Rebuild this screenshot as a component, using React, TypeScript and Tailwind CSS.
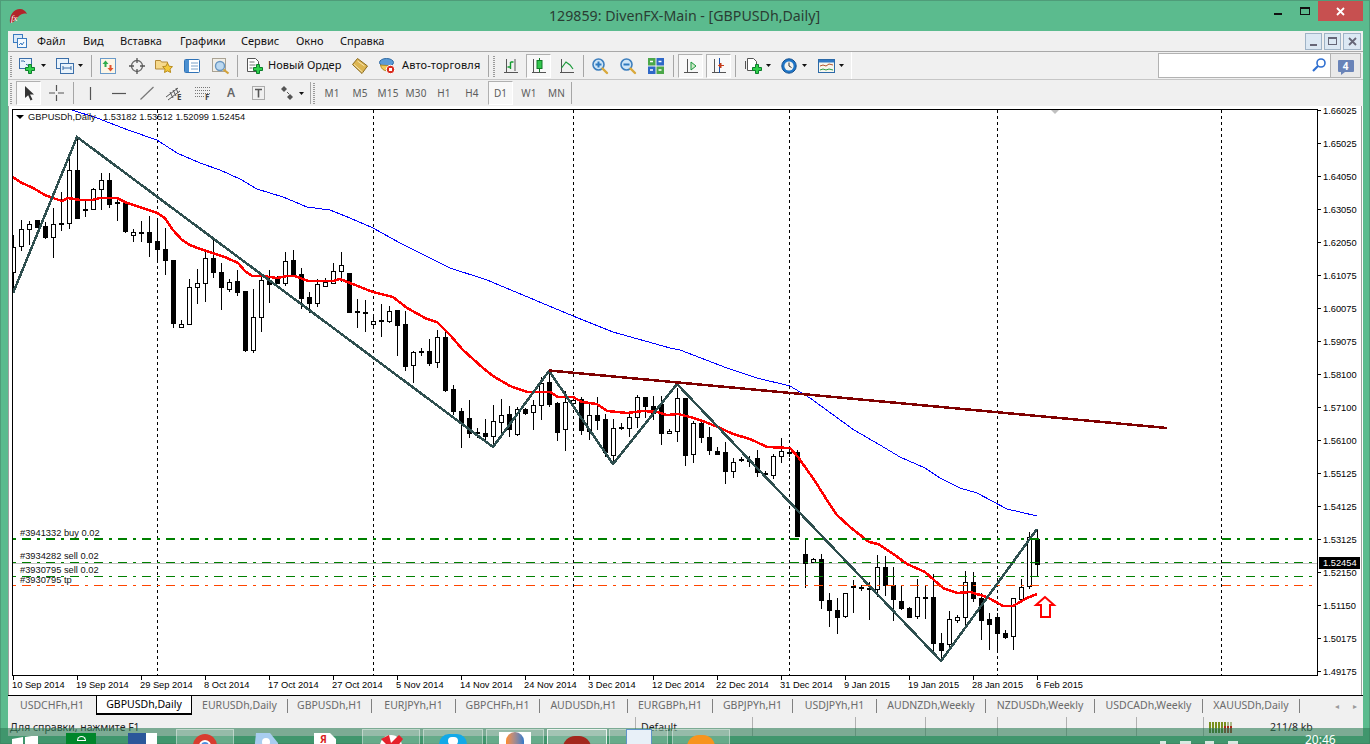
import type { ReactNode } from "react";

// candle rows: x, body top, body bottom, high, low, white (y read off 3x crops)
type Row = [number, number, number, number, number, number];

const ROWS_A: Row[] = [
  [13, 410, 485, 375, 550, 1], [21, 358, 410, 330, 422, 1], [29, 343, 358, 333, 405, 1], [37, 330, 350, 330, 352, 0],
  [45, 348, 380, 335, 388, 0], [53, 343, 382, 295, 445, 1], [61, 340, 343, 245, 362, 1], [69, 180, 340, 140, 357, 1],
  [77, 180, 323, 85, 323, 0], [85, 298, 302, 270, 320, 0], [93, 238, 298, 235, 300, 1], [101, 210, 238, 190, 300, 1],
  [109, 210, 282, 190, 295, 0], [117, 277, 281, 265, 332, 0], [125, 280, 365, 275, 368, 0], [133, 367, 376, 358, 395, 1],
  [141, 366, 367, 332, 395, 0], [149, 366, 395, 318, 440, 0], [157, 393, 418, 330, 455, 0], [165, 418, 452, 355, 495, 0],
  [173, 450, 638, 450, 655, 0], [181, 643, 652, 630, 653, 1], [189, 532, 643, 507, 645, 1], [197, 520, 532, 478, 582, 1],
  [205, 445, 520, 420, 575, 1], [213, 445, 488, 380, 503, 0], [221, 487, 532, 460, 600, 0], [229, 515, 535, 508, 545, 1],
  [237, 513, 545, 480, 557, 0], [245, 543, 720, 543, 725, 0], [253, 620, 718, 537, 730, 1], [261, 510, 620, 497, 665, 1],
  [269, 510, 522, 480, 578, 0], [277, 503, 518, 497, 523, 0], [285, 452, 517, 427, 527, 1], [293, 450, 495, 420, 497, 0],
  [301, 492, 563, 475, 597, 0], [309, 562, 580, 545, 610, 0], [317, 523, 580, 507, 592, 1], [325, 517, 530, 505, 530, 1],
  [333, 482, 517, 460, 520, 1], [341, 466, 485, 425, 515, 1],
];

const ROWS_B: Row[] = [
  [349, -21, 95, -21, 95, 0], [357, 94, 97, 58, 143, 0], [365, 97, 100, 60, 155, 0], [373, 124, 133, 112, 145, 1],
  [381, 121, 124, 72, 170, 0], [389, 92, 122, 78, 130, 1], [397, 90, 134, 90, 228, 0], [405, 132, 258, 92, 272, 0],
  [413, 217, 257, 212, 308, 1], [421, 213, 216, 205, 228, 0], [429, 213, 248, 178, 257, 0], [437, 172, 248, 150, 263, 1],
  [445, 172, 330, 155, 335, 0], [453, 328, 395, 315, 405, 0], [461, 393, 428, 385, 503, 0], [469, 415, 460, 360, 475, 0],
  [477, 457, 460, 445, 475, 0], [485, 460, 470, 418, 480, 0], [493, 424, 470, 375, 500, 1], [501, 404, 424, 358, 465, 1],
  [509, 403, 447, 378, 470, 0], [517, 388, 464, 382, 467, 1], [525, 388, 400, 385, 405, 0], [533, 376, 397, 360, 450, 1],
  [541, 310, 377, 290, 420, 1], [549, 306, 371, 280, 380, 0], [557, 368, 455, 365, 482, 0], [565, 367, 448, 332, 512, 1],
  [573, 360, 368, 350, 368, 1], [581, 358, 452, 352, 465, 0], [589, 405, 452, 370, 480, 1], [597, 405, 420, 350, 450, 0],
  [605, 417, 517, 402, 530, 0], [613, 445, 527, 418, 555, 1], [621, 442, 445, 430, 450, 0], [629, 412, 446, 393, 470, 1],
  [637, 352, 412, 345, 445, 1], [645, 352, 380, 352, 415, 0], [653, 378, 400, 348, 420, 0], [661, 372, 458, 348, 495, 0],
  [669, 453, 460, 447, 462, 1], [677, 355, 455, 325, 487, 1], [685, 353, 524, 353, 557, 0], [693, 430, 523, 423, 550, 1],
  [701, 430, 473, 418, 490, 0], [709, 472, 512, 442, 525, 0], [717, 512, 520, 500, 525, 0], [725, 517, 575, 487, 612, 0],
  [733, 547, 574, 535, 593, 1], [741, 537, 540, 530, 545, 0], [749, 539, 542, 528, 562, 0], [757, 535, 578, 510, 590, 0],
  [765, 579, 582, 572, 590, 0], [773, 528, 584, 522, 597, 1], [781, 514, 528, 475, 548, 1], [789, 516, 519, 505, 530, 0],
];

const ROWS_C: Row[] = [
  [797, 67, 320, 60, 320, 0], [805, 372, 398, 325, 473, 0], [813, 387, 396, 385, 400, 1], [821, 388, 512, 372, 537, 0],
  [829, 511, 542, 490, 590, 0], [837, 540, 560, 505, 612, 0], [845, 490, 560, 488, 563, 1], [853, 468, 472, 450, 548, 0],
  [861, 471, 475, 466, 483, 0], [869, 475, 479, 455, 570, 0], [877, 412, 478, 375, 500, 1], [885, 412, 467, 378, 498, 0],
  [893, 465, 506, 412, 572, 0], [901, 514, 536, 465, 540, 0], [909, 534, 560, 530, 565, 0], [917, 502, 560, 447, 568, 1],
  [925, 500, 503, 465, 568, 0], [933, 502, 640, 432, 665, 0], [941, 640, 662, 610, 695, 0], [949, 568, 643, 543, 655, 1],
  [957, 562, 570, 555, 578, 1], [965, 457, 562, 422, 587, 1], [973, 457, 505, 425, 515, 0], [981, 505, 570, 490, 630, 0],
  [989, 568, 582, 548, 660, 0], [997, 562, 611, 548, 660, 0], [1005, 610, 622, 600, 627, 0], [1013, 505, 620, 505, 660, 1],
  [1021, 470, 505, 447, 510, 1], [1029, 320, 468, 305, 478, 1], [1037, 327, 401, 297, 438, 0],
];

const CANDLES: Row[] = [
  ...ROWS_A.map((r) => shift(r, 110)),
  ...ROWS_B.map((r) => shift(r, 280)),
  ...ROWS_C.map((r) => shift(r, 430)),
];

function shift(r: Row, top: number): Row {
  return [r[0], top + r[1] / 3, top + r[2] / 3, top + r[3] / 3, top + r[4] / 3, r[5]];
}

const RED =
  "13,177 20,182 33,188 45,195 53,198 62,201 68,198 80,200 92,200 100,198 117,198 127,203 143,208 157,213 165,218 173,230 182,240 190,245 200,249 213,253 227,258 238,263 245,271 252,276 263,276 277,278 287,276 295,276 308,281 333,281 340,279 350,283 373,292 393,297 407,308 427,319 437,322 450,335 463,350 483,368 493,376 510,386 527,392 550,392 558,397 573,397 582,402 597,404 607,411 627,413 643,411 657,412 667,415 678,414 690,417 703,421 720,428 733,434 750,439 767,447 790,448 798,457 810,474 813,478 825,497 837,515 850,527 869,542 878,544 892,553 907,564 925,572 943,588 957,593 970,592 987,597 1003,606 1013,606 1027,598 1037,594";

const BLUE =
  "72,110 97,118 128,130 157,140 177,153 200,163 220,170 240,179 257,189 283,197 307,207 330,210 350,218 373,228 400,243 450,268 487,280 573,316 613,332 670,348 680,350 727,368 757,378 790,386 810,398 854,430 880,445 900,457 925,468 940,478 960,488 977,493 1007,509 1037,516";

const ZIGZAG = "13,293 77,137 493,447 549,371 613,464 677,384 941,661 1037,529";

const PRICES = [
  [111, "1.66025"], [144, "1.65025"], [177, "1.64050"], [210, "1.63050"], [243, "1.62050"], [276, "1.61075"],
  [309, "1.60075"], [342, "1.59075"], [375, "1.58100"], [408, "1.57100"], [441, "1.56100"], [474, "1.55125"],
  [507, "1.54125"], [540, "1.53125"], [573, "1.52150"], [606, "1.51150"], [639, "1.50175"], [672, "1.49175"],
] as const;

const DATES = [
  "10 Sep 2014", "19 Sep 2014", "29 Sep 2014", "8 Oct 2014", "17 Oct 2014", "27 Oct 2014", "5 Nov 2014", "14 Nov 2014",
  "24 Nov 2014", "3 Dec 2014", "12 Dec 2014", "22 Dec 2014", "31 Dec 2014", "9 Jan 2015", "19 Jan 2015", "28 Jan 2015", "6 Feb 2015",
];

const TABS = [
  { label: "USDCHFh,H1", w: "w-[88px]" },
  { label: "GBPUSDh,Daily", w: "w-[96px]", active: true },
  { label: "EURUSDh,Daily", w: "w-[96px]", sep: true },
  { label: "GBPUSDh,H1", w: "w-[84px]", sep: true },
  { label: "EURJPYh,H1", w: "w-[84px]", sep: true },
  { label: "GBPCHFh,H1", w: "w-[84px]", sep: true },
  { label: "AUDUSDh,H1", w: "w-[88px]", sep: true },
  { label: "EURGBPh,H1", w: "w-[85px]", sep: true },
  { label: "GBPJPYh,H1", w: "w-[80px]", sep: true },
  { label: "USDJPYh,H1", w: "w-[84px]", sep: true },
  { label: "AUDNZDh,Weekly", w: "w-[109px]", sep: true },
  { label: "NZDUSDh,Weekly", w: "w-[109px]", sep: true },
  { label: "USDCADh,Weekly", w: "w-[108px]", sep: true },
  { label: "XAUUSDh,Daily", w: "w-[97px]", sep: true },
];

const MENU = [
  { label: "Файл", w: "w-[46px]" },
  { label: "Вид", w: "w-[37px]" },
  { label: "Вставка", w: "w-[60px]" },
  { label: "Графики", w: "w-[61px]" },
  { label: "Сервис", w: "w-[55px]" },
  { label: "Окно", w: "w-[44px]" },
  { label: "Справка", w: "w-[60px]" },
];

function Plus({ x, y }: { x: number; y: number }) {
  return (
    <path
      d={`M${x + 3.5} ${y + 0.5}h3v3h3v3h-3v3h-3v-3h-3v-3h3z`}
      fill="#2fd04a"
      stroke="#0c7f2c"
    />
  );
}

function Drop({ className = "" }: { className?: string }) {
  return (
    <svg width="5" height="3" viewBox="0 0 5 3" className={className}>
      <path d="M0 0h5L2.5 3z" fill="#111" />
    </svg>
  );
}

function Sep({ className = "" }: { className?: string }) {
  return <div className={`h-[22px] w-px bg-[#a6a6a6] ${className}`} />;
}

function Grip({ className = "" }: { className?: string }) {
  return (
    <div
      className={`h-[22px] w-[2px] bg-[repeating-linear-gradient(0deg,#9a9a9a_0_1px,transparent_1px_2px)] ${className}`}
    />
  );
}

function Pressed({ className = "", children }: { className?: string; children: ReactNode }) {
  return (
    <div
      className={`flex h-[24px] w-[25px] flex-shrink-0 items-center justify-center border border-t-[#b0b0b0] border-l-[#b0b0b0] border-r-white border-b-white bg-[#f8f8f8] ${className}`}
    >
      {children}
    </div>
  );
}

function Icon({ w, h = 16, className = "", children }: { w: number; h?: number; className?: string; children: ReactNode }) {
  return (
    <svg width={w} height={h} viewBox={`0 0 ${w} ${h}`} fill="none" className={`flex-shrink-0 overflow-visible ${className}`}>
      {children}
    </svg>
  );
}

function Loupe({ sign }: { sign: "+" | "-" }) {
  return (
    <Icon w={16}>
      <circle cx="6.5" cy="6.5" r="5.5" fill="#cfe6f7" stroke="#3d7fbe" strokeWidth="1.6" />
      <path d="M3.5 6.5h6" stroke="#2f7ac0" strokeWidth="2" />
      {sign === "+" && <path d="M6.5 3.5v6" stroke="#2f7ac0" strokeWidth="2" />}
      <path d="M10.5 10.5l4.5 4.5" stroke="#d9a93c" strokeWidth="2.4" strokeLinecap="round" />
    </Icon>
  );
}

function Toolbars() {
  return (
    <>
      <div className="flex h-[28px] items-center border-t border-[#a8a8a8]">
        <Grip className="ml-[2px]" />
        <Icon w={16} className="ml-[7px]">
          <rect x="0.5" y="0.5" width="12" height="10" fill="#e9f3fb" stroke="#3b6ea8" />
          <path d="M2 3h3M8 7h3M5 3l1 1M8 7l-1-1" stroke="#3b6ea8" />
          <Plus x={6} y={6} />
        </Icon>
        <Drop className="ml-[6px]" />
        <Icon w={18} className="ml-[10px]">
          <rect x="0.5" y="0.5" width="12" height="10" fill="#e9f3fb" stroke="#3b6ea8" />
          <rect x="4.5" y="5.5" width="13" height="10" fill="#e9f3fb" stroke="#3b6ea8" />
          <path d="M7 10h8M7 8v4M15 8v4" stroke="#3b6ea8" />
        </Icon>
        <Drop className="ml-[4px]" />
        <Sep className="ml-[8px]" />
        <Icon w={16} className="ml-[8px]">
          <rect x="0.5" y="0.5" width="15" height="15" fill="#fdf6e6" stroke="#6a9ac9" />
          <path d="M5.5 2.5l-3 3.5h2v3h2V6h2z" fill="#2fae4c" />
          <path d="M10.5 13.5l3-3.5h-2V7h-2v3h-2z" fill="#e2542e" />
        </Icon>
        <Icon w={16} className="ml-[13px]">
          <circle cx="8" cy="8" r="5.5" stroke="#666" strokeWidth="1.3" />
          <path d="M8 0v5M8 11v5M0 8h5M11 8h5" stroke="#555" strokeWidth="1.3" />
        </Icon>
        <Icon w={18} className="ml-[10px]">
          <path d="M0.5 2.5h5l1 1.5h6v7h-12z" fill="#f6d98c" stroke="#b48a38" />
          <path d="M12.5 5l1.6 3.2 3.4.5-2.5 2.4.6 3.4-3.1-1.6-3 1.6.6-3.4-2.5-2.4 3.4-.5z" fill="#f4c93a" stroke="#b98c1c" />
        </Icon>
        <Icon w={16} className="ml-[11px]">
          <rect x="0.5" y="1.5" width="15" height="13" rx="1" fill="#fff" stroke="#2f72b6" />
          <rect x="1" y="2" width="4" height="12" fill="#4b8fd0" />
          <path d="M7 5h7M7 8h7M7 11h7" stroke="#7ba2c8" />
        </Icon>
        <Icon w={18} className="ml-[12px]">
          <rect x="0.5" y="0.5" width="13" height="13" fill="#f1eee6" stroke="#a9a293" />
          <circle cx="8" cy="8" r="4.5" fill="#bcd9f0" stroke="#6a97c1" strokeWidth="1.4" />
          <path d="M11.5 11.5l5 4" stroke="#d2a23b" strokeWidth="2.2" />
        </Icon>
        <Sep className="ml-[7px]" />
        <Icon w={16} className="ml-[9px]">
          <path d="M0.5 0.5h8l3 3v10h-11z" fill="#fff" stroke="#555" />
          <path d="M2.5 4h5M2.5 7h6M2.5 10h3" stroke="#777" />
          <Plus x={6} y={6} />
        </Icon>
        <span className="ml-[5px] w-[74px] flex-shrink-0 whitespace-nowrap text-[11px] text-[#111]">
          Новый Ордер
        </span>
        <Icon w={16} className="ml-[10px]">
          <path d="M5.5 0.5L15.500 8 10 15.500 0.500 6.500z" fill="#dcb552" stroke="#8a6a1e" />
          <path d="M2 6.500l8.500 7.500M5.500 3l7 5" stroke="#f7e6b0" />
        </Icon>
        <Icon w={16} className="ml-[11px]">
          <ellipse cx="7.500" cy="4.500" rx="7" ry="4" fill="#5b9bd6" stroke="#2f6aa4" />
          <path d="M1.500 7c1 7 10 8 12 1z" fill="#f1ca58" stroke="#b08a28" />
          <circle cx="11.500" cy="11.500" r="4.200" fill="#d92c1f" stroke="#fff" />
          <rect x="10" y="10" width="3" height="3" fill="#fff" />
        </Icon>
        <span className="ml-[7px] w-[78px] flex-shrink-0 whitespace-nowrap text-[11px] tracking-[0.15px] text-[#111]">
          Авто-торговля
        </span>
        <Sep className="ml-[8px]" />
        <Grip className="ml-[4px]" />
        <Icon w={14} className="ml-[9px]">
          <path d="M2.5 1v13M0 14.5h14" stroke="#555" />
          <path d="M6.5 11V4M6.5 4h3M3.5 9h3" stroke="#129a2e" strokeWidth="1.4" />
          <path d="M11 1v12" stroke="#555" />
        </Icon>
        <Pressed className="ml-[8px]">
          <Icon w={14}>
            <path d="M1.5 1v13M0 14.5h14" stroke="#555" />
            <path d="M7.5 0v14" stroke="#0f7b26" />
            <rect x="5" y="2.5" width="5" height="8" fill="#33c64d" stroke="#0f7b26" />
          </Icon>
        </Pressed>
        <Icon w={14} className="ml-[9px]">
          <path d="M1.5 1v13M0 14.5h14" stroke="#555" />
          <path d="M1.5 10L6 4l4 3 3 4" stroke="#1a9a3a" strokeWidth="1.2" />
        </Icon>
        <Sep className="ml-[9px]" />
        <div className="ml-[8px] flex">
          <Loupe sign="+" />
        </div>
        <div className="ml-[12px] flex">
          <Loupe sign="-" />
        </div>
        <Icon w={16} className="ml-[12px]">
          <rect x="0" y="0" width="7.5" height="7.5" fill="#4ca84a" />
          <rect x="8.5" y="0" width="7.5" height="7.5" fill="#2f68c8" />
          <rect x="0" y="8.5" width="7.5" height="7.5" fill="#2f68c8" />
          <rect x="8.5" y="8.5" width="7.5" height="7.5" fill="#4ca84a" />
          <path d="M2 3.5h3M10.5 3.5h3M2 12h3M10.5 12h3" stroke="#fff" strokeWidth="1.4" />
        </Icon>
        <Sep className="ml-[9px]" />
        <Pressed className="ml-[4px]">
          <Icon w={14}>
            <path d="M3.5 1v13M0 14.5h14" stroke="#555" />
            <path d="M7 4l5 4-5 4z" fill="#cfe9c8" stroke="#17953a" />
          </Icon>
        </Pressed>
        <Pressed className="ml-[3px]">
          <Icon w={14}>
            <path d="M2.5 1v13M0 14.5h14" stroke="#555" />
            <path d="M7.5 0v15" stroke="#1b50a8" />
            <path d="M12 7.5H9M9 5v5L6.5 7.5z" fill="#c43b1a" stroke="#c43b1a" />
          </Icon>
        </Pressed>
        <Sep className="ml-[4px]" />
        <Icon w={17} className="ml-[9px]">
          <path d="M2.5 0.5h6l3 3v9h-9z" fill="#fff" stroke="#555" />
          <path d="M0.5 3v8" stroke="#555" />
          <Plus x={7} y={6} />
        </Icon>
        <Drop className="ml-[4px]" />
        <Icon w={16} className="ml-[10px]">
          <circle cx="8" cy="8" r="7.2" fill="#1f76c8" stroke="#14508f" />
          <circle cx="8" cy="8" r="4.6" fill="#f3f3ef" />
          <path d="M8 4.5V8l2.5 1.5" stroke="#333" />
        </Icon>
        <Drop className="ml-[5px]" />
        <Icon w={17} className="ml-[11px]">
          <rect x="0.5" y="1.5" width="16" height="13" fill="#f6f6ee" stroke="#2c6aa8" />
          <rect x="1" y="2" width="15" height="2.5" fill="#2f79c6" />
          <path d="M2 8l3-1 3 1 3-2 4 1" stroke="#b2552f" />
          <path d="M2 12l3-1 3 1 3-1 4 1" stroke="#2d9c45" />
        </Icon>
        <Drop className="ml-[4px]" />
        <div className="ml-[7px] h-full w-px bg-white" />
        <div className="ml-auto flex h-[25px] items-stretch pr-[2px]">
          <div className="flex w-[173px] items-center justify-end border border-[#b2b2b2] bg-white pr-[4px]">
            <Icon w={14}>
              <circle cx="9" cy="5" r="4" stroke="#2f6fd0" strokeWidth="1.6" />
              <path d="M6 8l-5 5" stroke="#2f6fd0" strokeWidth="2.2" />
            </Icon>
          </div>
          <div className="flex w-[30px] items-center justify-center border border-l-0 border-[#b2b2b2] bg-[#e9e9e9]">
            <div className="relative flex h-[12px] w-[16px] items-center justify-center rounded-[1px] bg-[#6a84b8] text-[10px] font-bold leading-none text-white">
              4
              <div className="absolute bottom-[-3px] left-[3px] h-0 w-0 border-r-[4px] border-t-[3px] border-r-transparent border-t-[#6a84b8]" />
            </div>
          </div>
        </div>
      </div>

      <div className="flex h-[27px] items-center border-t border-[#c6c6c6]">
        <Grip className="ml-[2px]" />
        <Pressed className="ml-[4px]">
          <Icon w={12}>
            <path d="M2 1l9 8.5H7l2.5 5-2 1-2.3-5.200L2 13z" fill="#333" />
          </Icon>
        </Pressed>
        <Icon w={15} className="ml-[8px]">
          <path d="M7.5 0v6M7.5 10v6M0 8h6M9 8h6" stroke="#555" strokeWidth="1.2" />
        </Icon>
        <Sep className="ml-[9px]" />
        <Icon w={16} className="ml-[9px]">
          <path d="M7.5 2v13" stroke="#555" strokeWidth="1.2" />
        </Icon>
        <Icon w={14} className="ml-[13px]">
          <path d="M0 8.500h14" stroke="#555" strokeWidth="1.2" />
        </Icon>
        <Icon w={14} className="ml-[14px]">
          <path d="M0.500 14.500L13.500 2" stroke="#777" strokeWidth="1.2" />
        </Icon>
        <Icon w={16} className="ml-[12px]">
          <path d="M0 12l12-9M2 15l12-9M4 7l3 6M7 5l3 6M10 3l2 5" stroke="#555" />
          <text x="11" y="15" className="fill-[#444] text-[8px] font-bold">E</text>
        </Icon>
        <Icon w={15} className="ml-[13px]">
          <path d="M0 2.500h15M0 5.500h15M0 8.500h15M0 11.500h10" stroke="#777" strokeDasharray="1 1" />
          <text x="10" y="15" className="fill-[#444] text-[8px] font-bold">F</text>
        </Icon>
        <span className="ml-[17px] w-[8px] text-[12px] font-semibold leading-none text-[#666]">A</span>
        <Icon w={13} className="ml-[17px]">
          <rect x="0.500" y="1.500" width="12" height="13" stroke="#666" strokeDasharray="1 1" />
          <path d="M3 4.500h7M6.500 4.500v8" stroke="#555" strokeWidth="1.6" />
        </Icon>
        <Icon w={15} className="ml-[15px]">
          <path d="M4 1l3 3-3 3-3-3z" fill="#555" />
          <path d="M10 9l3 3-3 3-3-3z" fill="#555" />
          <path d="M7 7l2 2" stroke="#555" />
        </Icon>
        <Drop className="ml-[4px]" />
        <Sep className="ml-[6px]" />
        <Grip className="ml-[2px]" />
        <div className="ml-[3px] flex text-[10px] tracking-[0.2px] text-[#5c5c5c]">
          {["M1", "M5", "M15", "M30", "H1", "H4"].map((t) => (
            <span key={t} className="w-[28px] text-center">{t}</span>
          ))}
        </div>
        <Pressed className="ml-[2px] text-[10px] text-[#5c5c5c]">D1</Pressed>
        <div className="ml-[2px] flex text-[10px] tracking-[0.2px] text-[#5c5c5c]">
          <span className="w-[28px] text-center">W1</span>
          <span className="w-[27px] text-center">MN</span>
        </div>
        <Sep className="ml-px" />
      </div>
    </>
  );
}

function Chart() {
  const levelDash = "3 6 9 6";
  return (
    <svg width="1355" height="589" viewBox="8 106 1355 589" className="block font-['Liberation_Sans',sans-serif]">
      <defs>
        <clipPath id="plot">
          <rect x="13" y="110" width="1304" height="565" />
        </clipPath>
      </defs>
      <rect x="8" y="106" width="1355" height="589" fill="#fff" />
      <g clipPath="url(#plot)">
        {[157, 373, 573, 789, 997, 1221].map((x) => (
          <path key={x} d={`M${x + 0.5} 110V675`} stroke="#000" strokeDasharray="3 3" />
        ))}
        <path d="M13 563.500H1317" stroke="#c0c0c0" />
        {CANDLES.map(([x, t, b, h, l, w]) => (
          <g key={x} shapeRendering="crispEdges">
            <path d={`M${x + 0.5} ${Math.round(h)}V${Math.round(l)}`} stroke="#000" />
            <rect
              x={x - 1.5}
              y={Math.round(t) + 0.5}
              width="4"
              height={Math.max(1, Math.round(b - t))}
              fill={w ? "#fff" : "#000"}
              stroke="#000"
            />
          </g>
        ))}
        <polyline points={BLUE} fill="none" stroke="#0000ff" shapeRendering="crispEdges" />
        <polyline points={RED} fill="none" stroke="#ff0000" strokeWidth="2.500" strokeLinejoin="round" shapeRendering="crispEdges" />
        <polyline points={ZIGZAG} fill="none" stroke="#2f4f4f" strokeWidth="2.500" shapeRendering="crispEdges" />
        <path d="M549 370.500L1167 428" stroke="#800000" strokeWidth="2.500" shapeRendering="crispEdges" />
        <path d={`M13 539H1317`} stroke="#008000" strokeWidth="2" strokeDasharray={levelDash} />
        <path d={`M13 562.500H1317`} stroke="#008000" strokeDasharray={levelDash} />
        <path d={`M13 576.500H1317`} stroke="#008000" strokeDasharray={levelDash} />
        <path d={`M13 585.500H1317`} stroke="#ff4500" strokeDasharray={levelDash} />
        <path d="M1045 597l-9 8h5v12h9v-12h4z" fill="#fff" stroke="#ff0000" strokeWidth="2" />
        <path d="M1051 110h8l-4 4z" fill="#c0c0c0" />
      </g>

      <path d="M12.500 109.500H1317.500V675.500H12.500Z" fill="none" stroke="#000" strokeWidth="1.300" shapeRendering="crispEdges" />
      <path d="M8.500 106V695" stroke="#a0a0a0" />
      <path d="M1361.500 106V695" stroke="#a0a0a0" />

      <path d="M16 115h8l-4 4z" fill="#000" />
      <text x="28" y="120" className="fill-[#111] text-[9.300px]">GBPUSDh,Daily</text>
      <text x="103" y="120" className="fill-[#111] text-[9.300px]">1.53182 1.53512 1.52099 1.52454</text>

      <g className="fill-[#111] text-[9.300px]">
        <text x="20" y="536">#3941332 buy 0.02</text>
        <text x="20" y="559">#3934282 sell 0.02</text>
        <text x="20" y="573">#3930795 sell 0.02</text>
        <text x="20" y="583">#3930795 tp</text>
      </g>

      {PRICES.map(([y, t]) => (
        <g key={t}>
          <path d={`M1317 ${y - 0.5}h4`} stroke="#000" />
          <text x="1323" y={y + 3} className="fill-[#000] text-[9.300px]">{t}</text>
        </g>
      ))}
      <rect x="1319" y="557" width="41" height="12" fill="#000" />
      <text x="1323" y="566" className="fill-white text-[9.300px]">1.52454</text>

      {DATES.map((d, i) => (
        <g key={d}>
          <path d={`M${13.5 + i * 64} 675V680`} stroke="#000" />
          <text x={12 + i * 64} y="688" className="fill-[#000] text-[9.300px]">{d}</text>
        </g>
      ))}
    </svg>
  );
}

function Tabs() {
  return (
    <div className="flex h-[20px] items-stretch border-t border-black bg-[#f0f0f0] text-[10.500px] text-[#6b6b6b]">
      {TABS.map((t) => (
        <div
          key={t.label}
          className={`flex flex-shrink-0 items-center justify-center whitespace-nowrap ${t.w} ${
            t.active ? "border-x border-b-2 border-black bg-white text-black" : ""
          }`}
        >
          <span className="flex-1 text-center">{t.label}</span>
          {t.sep && <span className="h-[14px] w-px bg-[#808080]" />}
        </div>
      ))}
      <div className="ml-[35px] flex items-center gap-[14px] text-[8px] text-[#9a9a9a]">
        <span>◂</span>
        <span>▸</span>
      </div>
    </div>
  );
}

function StatusBar() {
  const cells = ["w-[117px]", "w-[103px]", "w-[70px]", "w-[72px]", "w-[69px]", "w-[70px]", "w-[67px]"];
  return (
    <div className="flex h-[21px] bg-[#f0f0f0] pt-[2px] text-[10.500px] leading-[20px] text-[#222]">
      <div className="w-[628px] border-r border-[#b0b0b0] pl-[2px]">Для справки, нажмите F1</div>
      {cells.map((c, i) => (
        <div key={c + i} className={`${c} border-r border-[#b0b0b0] pl-[5px]`}>
          {i === 0 ? "Default" : ""}
        </div>
      ))}
      <div className="flex items-start pl-[5px] pt-[5px]">
        <svg width="24" height="11" viewBox="0 0 24 11">
          {Array.from({ length: 8 }).map((_, i) => (
            <g key={i}>
              <rect x={i * 3} y="0" width="2" height="11" fill={i > 5 ? "#a9b98a" : "#7a8f1d"} />
              <rect x={i * 3} y={i > 4 ? 4 : 7} width="2" height={i > 4 ? 7 : 4} fill={i > 4 ? "#a82a1a" : "#4f6f12"} />
            </g>
          ))}
        </svg>
        <span className="ml-[37px] mt-[-2px] leading-[14px]">211/8 kb</span>
      </div>
    </div>
  );
}

function Taskbar() {
  const frame = "h-[20px] flex-shrink-0 border border-white/40 bg-white/20 flex justify-center pt-[4px]";
  return (
    <div className="absolute bottom-0 left-0 flex h-[16px] w-full overflow-hidden bg-[#2f7d57]/60 pt-px">
      <svg width="26" height="20" viewBox="0 0 26 20" className="ml-[12px] mt-[7px] flex-shrink-0">
        <path d="M0 3l11-2v9H0zM13 1l13-2v11H13z" fill="#fff" />
      </svg>
      <div className="ml-[28px] mt-[4px] flex h-[20px] w-[30px] flex-shrink-0 justify-center bg-[#00862b] pt-[3px]">
        <div className="h-[5px] w-[9px] rounded-t-full border border-white" />
      </div>
      <div className="ml-[32px] mt-[4px] flex h-[20px] w-[29px] flex-shrink-0">
        <div className="w-[18px] bg-[#2b579a]" />
        <div className="w-[11px] bg-white" />
      </div>
      <div className={`ml-[19px] w-[58px] ${frame}`}>
        <svg width="24" height="24" viewBox="0 0 24 24">
          <circle cx="12" cy="12" r="12" fill="#d93c2f" />
          <path d="M2 18L12 12h11a11 11 0 0 1-2 7z" fill="#f2c230" />
          <circle cx="12" cy="12" r="5" fill="#4a8ee0" stroke="#fff" strokeWidth="2" />
        </svg>
      </div>
      <svg width="24" height="20" viewBox="0 0 24 20" className="ml-[20px] mt-[4px] flex-shrink-0">
        <path d="M2 0h14l8 10v10H0z" fill="#a8cdf0" />
        <circle cx="12" cy="9" r="4" fill="#fff" />
      </svg>
      <svg width="24" height="11" viewBox="0 0 24 11" className="ml-[34px] mt-[4px] flex-shrink-0">
        <path d="M2 0h16l6 6v5H2z" fill="#fff" />
        <text x="8" y="10" className="fill-[#d92020] text-[10px] font-bold">Я</text>
      </svg>
      <div className={`ml-[26px] w-[58px] ${frame}`}>
        <svg width="28" height="24" viewBox="0 0 28 24">
          <circle cx="14" cy="12" r="11" fill="#fff" />
          <path d="M4 5l8-4 2 8 8-8 4 4-12 16-2-8z" fill="#e5212b" />
        </svg>
      </div>
      <div className={`ml-[3px] w-[60px] ${frame}`}>
        <div className="h-[20px] w-[28px] rounded-full bg-[#12a9e8] pl-[9px] pt-[3px]">
          <div className="h-[8px] w-[10px] rounded-full bg-white" />
        </div>
      </div>
      <div className={`ml-[3px] w-[58px] ${frame}`}>
        <div className="mt-[-2px] flex h-[20px] w-[32px] justify-center bg-white">
          <div className="h-full w-[18px] rounded-full bg-gradient-to-r from-[#ff8a1e] to-[#2f78c8]" />
        </div>
      </div>
      <div className={`ml-[3px] w-[60px] border-white/80 bg-white/30 ${frame}`}>
        <div className="mt-[2px] h-[24px] w-[28px] rounded-full bg-[#a3281d]" />
      </div>
      <div className={`ml-[2px] w-[59px] ${frame}`}>
        <div className="mt-[-4px] h-[20px] w-[24px] bg-[#e8f0f8] ring-1 ring-[#5f93c9]" />
      </div>
      <div className={`ml-[4px] w-[58px] ${frame}`}>
        <div className="mt-[1px] h-[24px] w-[28px] rounded-full bg-[#f7941d]" />
      </div>
      <div className="ml-[430px] mt-[12px] flex h-[3px] flex-shrink-0 gap-[14px]">
        <div className="h-[3px] w-[6px] bg-white/80" />
        <div className="h-[3px] w-[11px] bg-white/80" />
        <div className="h-[3px] w-[9px] bg-white/80" />
        <div className="h-[3px] w-[10px] bg-white/80" />
      </div>
      <span className="ml-[67px] mt-[7px] h-[8px] flex-shrink-0 text-[12px] leading-[8px] text-white">20:46</span>
    </div>
  );
}

export default function App() {
  return (
    <div className="relative h-[744px] w-[1370px] overflow-hidden bg-[#5bbb8e] font-['Noto_Sans','Liberation_Sans',sans-serif] shadow-[inset_0_0_0_1px_#4f9c79]">
      {/* Title bar */}
      <div className="relative flex h-[31px] items-start">
        <svg width="18" height="14" viewBox="0 0 18 14" className="ml-[9px] mt-[9px]">
          <path d="M1 14C0 6 5 0 11 0c3 0 6 2 7 5-3-1-6 0-8 2-2 2-3 6-9 7z" fill="#b3232a" />
          <text x="2" y="12" className="fill-white font-['Liberation_Serif',serif] text-[9px] italic">fx</text>
        </svg>
        <span className="absolute left-[549px] top-[7px] whitespace-nowrap text-[14.200px] leading-[18px] text-[#2a3d33]">
          129859: DivenFX-Main - [GBPUSDh,Daily]
        </span>
        <div className="absolute left-[1274px] top-[13px] h-[2px] w-[8px] bg-[#111]" />
        <div className="absolute left-[1300px] top-[7px] h-[8px] w-[10px] border border-t-[2px] border-[#111]" />
        <div className="absolute left-[1318px] top-px flex h-[20px] w-[45px] items-center justify-center bg-[#c75050]">
          <svg width="9" height="9" viewBox="0 0 9 9">
            <path d="M1 1l7 7M8 1L1 8" stroke="#fff" strokeWidth="1.800" />
          </svg>
        </div>
      </div>

      <div className="ml-[8px] w-[1355px]">
        <div className="flex h-[20px] items-center bg-[#f0f0f0]">
          <svg width="14" height="14" viewBox="0 0 14 14" className="ml-[5px]">
            <rect x="0.500" y="0.500" width="9" height="8" fill="#dbe9f7" stroke="#3b7bc0" />
            <rect x="4.500" y="4.500" width="9" height="9" fill="#f5fafe" stroke="#3b7bc0" />
            <path d="M6 11l2-2 1 2 2-3" stroke="#3b7bc0" fill="none" />
          </svg>
          <div className="ml-[10px] flex text-[11px] text-[#111]">
            {MENU.map((m) => (
              <span key={m.label} className={m.w}>{m.label}</span>
            ))}
          </div>
          <div className="ml-auto flex gap-[2px] pr-[2px]">
            <div className="flex h-[17px] w-[17px] items-end justify-center border border-[#9fb3c6] bg-[#dce8f3] pb-[3px]">
              <div className="h-[2px] w-[7px] bg-[#667]" />
            </div>
            <div className="flex h-[17px] w-[17px] items-center justify-center border border-[#9fb3c6] bg-[#dce8f3]">
              <div className="h-[8px] w-[9px] border border-t-[2px] border-[#667]" />
            </div>
            <div className="flex h-[17px] w-[18px] items-center justify-center border border-[#9fb3c6] bg-[#dce8f3]">
              <svg width="9" height="9" viewBox="0 0 9 9">
                <path d="M1 1l7 7M8 1L1 8" stroke="#667" strokeWidth="1.800" />
              </svg>
            </div>
          </div>
        </div>
        <div className="bg-[#f0f0f0]">
          <Toolbars />
        </div>
        <Chart />
        <Tabs />
        <StatusBar />
      </div>

      <Taskbar />
    </div>
  );
}
